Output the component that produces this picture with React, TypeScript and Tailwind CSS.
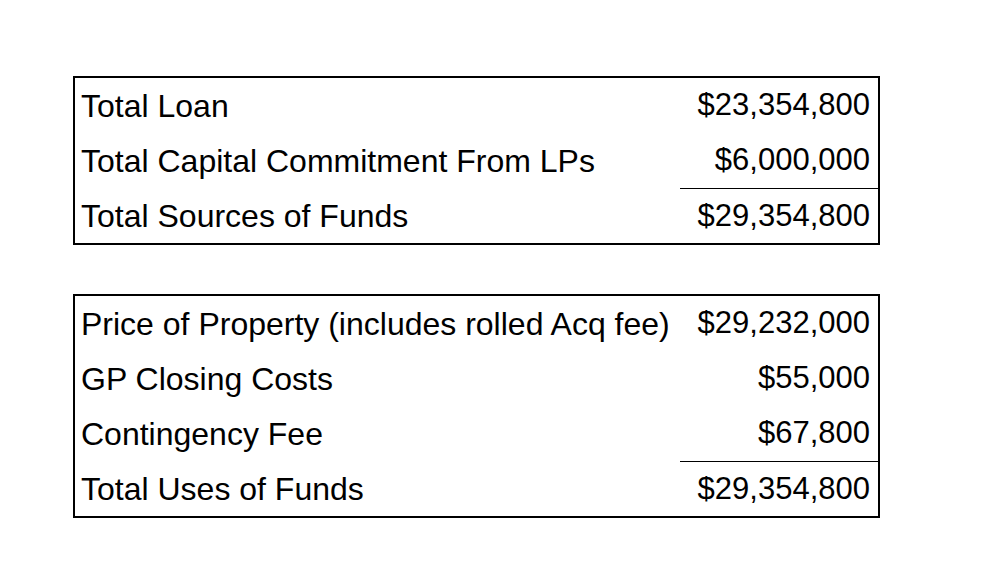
import React from 'react';

type Row = { label: string; value: string; total?: boolean };

const sources: Row[] = [
  { label: 'Total Loan', value: '$23,354,800' },
  { label: 'Total Capital Commitment From LPs', value: '$6,000,000' },
  { label: 'Total Sources of Funds', value: '$29,354,800', total: true },
];

const uses: Row[] = [
  { label: 'Price of Property (includes rolled Acq fee)', value: '$29,232,000' },
  { label: 'GP Closing Costs', value: '$55,000' },
  { label: 'Contingency Fee', value: '$67,800' },
  { label: 'Total Uses of Funds', value: '$29,354,800', total: true },
];

const FundsTable: React.FC<{ rows: Row[] }> = ({ rows }) => (
  <div className="w-[807px] border-2 border-black grid grid-cols-[605px_1fr]">
    {rows.map((row) => (
      <React.Fragment key={row.label}>
        <div className="h-[55px] flex items-center pl-[6px] text-[32px] whitespace-nowrap">{row.label}</div>
        <div
          className={
            row.total
              ? 'h-[55px] flex items-center justify-end pr-[8px] text-[31px] border-t-[1.5px] border-black'
              : 'h-[55px] flex items-center justify-end pr-[8px] text-[31px]'
          }
        >
          {row.value}
        </div>
      </React.Fragment>
    ))}
  </div>
);

export default function App() {
  return (
    <div
      className="w-[1000px] h-[586px] bg-white text-black pt-[76px] pl-[73px] flex flex-col gap-[49px]"
      style={{ fontFamily: '"Liberation Sans", Arial, sans-serif' }}
    >
      <FundsTable rows={sources} />
      <FundsTable rows={uses} />
    </div>
  );
}
